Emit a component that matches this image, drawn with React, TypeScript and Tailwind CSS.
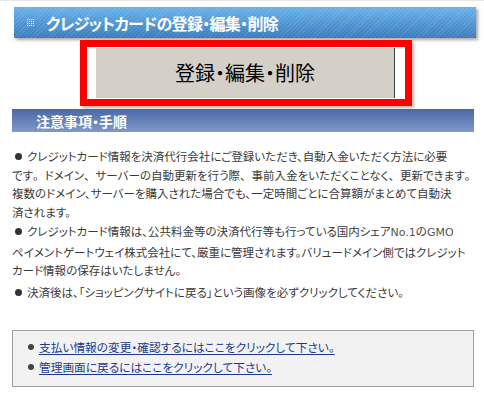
import React from "react";

const Dot = ({ cls }: { cls: string }) => (
  <span className={`inline-block rounded-full align-middle ${cls}`} />
);

const WidePunct = ({ text }: { text: string }) => (
  <>
    {text.split(/([、。])/).map((part, i) =>
      part === "、" || part === "。" ? (
        <span key={i} className="[font-feature-settings:normal]">
          {part}
        </span>
      ) : (
        <React.Fragment key={i}>{part}</React.Fragment>
      )
    )}
  </>
);

export default function App() {
  return (
    <div className="w-[484px] h-[396px] bg-white overflow-hidden font-['Noto_Sans_CJK_JP','Noto_Sans',sans-serif] [font-feature-settings:'palt'] border-t border-[#e6e6e6]">
      {/* header */}
      <div className="mx-[14px] mt-[6px] w-[462px] h-[31px] flex items-center bg-[repeating-linear-gradient(135deg,rgba(255,255,255,0.10)_0px,rgba(255,255,255,0.10)_1px,transparent_1px,transparent_3px),linear-gradient(to_bottom,#68b3ea,#3b7bbd)] shadow-[2px_2px_3px_rgba(0,0,0,0.35)]">
        <svg width="7" height="7" viewBox="0 0 7 7" className="ml-[13px] mr-[12px]">
          {[0, 2, 4, 6].map((y) =>
            [0, 2, 4, 6].map((x) => (
              <rect key={`${x}-${y}`} x={x} y={y} width="1" height="1" fill="#e8f4ff" />
            ))
          )}
        </svg>
        <span className="text-white text-[16px] font-bold leading-none tracking-[-0.7px]">
          クレジットカードの登録・編集・削除
        </span>
      </div>

      {/* red box button */}
      <div className="ml-[80px] mt-[2px] w-[332px] h-[66px] border-[7px] border-[#ff0000] bg-white shadow-[2px_2px_3px_rgba(0,0,0,0.3)] pl-[9px] pr-[10px] py-[1px]">
        <div className="h-full bg-[#d4d0c8] border-r border-[#404040] flex items-center justify-center">
          <span className="text-[20px] text-black leading-none">登録・編集・削除</span>
        </div>
      </div>

      {/* notice bar */}
      <div className="mx-[12px] mt-[3px] w-[462px] h-[23px] flex items-center pl-[24px] bg-[linear-gradient(to_bottom,#4a68a5,#7f99ca)]">
        <span className="text-white text-[14px] font-bold leading-none">注意事項・手順</span>
      </div>

      {/* body */}
      <div className="mx-[12px] mt-[15px] text-[11.5px] leading-[18.7px] text-[#3a3a3a] whitespace-nowrap">
        <div>
          <div>
            <Dot cls="w-[7px] h-[7px] bg-[#333] ml-[3px] mr-[5px] -mt-[2px]" />
            クレジットカード情報を決済代行会社にご登録いただき、自動入金いただく方法に必要
          </div>
          <div>
            <WidePunct text="です。ドメイン、サーバーの自動更新を行う際、事前入金をいただくことなく、更新できます。" />
          </div>
          <div>複数のドメイン、サーバーを購入された場合でも、一定時間ごとに合算額がまとめて自動決</div>
          <div>済されます。</div>
        </div>
        <div>
          <div>
            <Dot cls="w-[7px] h-[7px] bg-[#333] ml-[3px] mr-[5px] -mt-[2px]" />
            クレジットカード情報は、公共料金等の決済代行等も行っている国内シェア
            <span className="font-['DejaVu_Sans',sans-serif] text-[11px] text-[#555]">No.1</span>の
            <span className="font-['DejaVu_Sans',sans-serif] text-[11px] text-[#555]">GMO</span>
          </div>
          <div>ペイメントゲートウェイ株式会社にて、厳重に管理されます。バリュードメイン側ではクレジット</div>
          <div>カード情報の保存はいたしません。</div>
        </div>
        <div className="mt-[3px]">
          <Dot cls="w-[7px] h-[7px] bg-[#333] ml-[3px] mr-[5px] -mt-[2px]" />
          決済後は、「ショッピングサイトに戻る」という画像を必ずクリックしてください。
        </div>
      </div>

      {/* link box */}
      <div className="mx-[12px] mt-[28px] w-[462px] h-[57px] border border-[#a0a0a0] bg-[#f2f2f2] pt-[6px] pl-[15px] text-[11.7px] leading-[20px]">
        <div className="flex items-center">
          <Dot cls="w-[6px] h-[6px] bg-[#444] mr-[5px]" />
          <a className="text-[#1c3a8c] underline underline-offset-2">
            支払い情報の変更・確認するにはここをクリックして下さい。
          </a>
        </div>
        <div className="flex items-center">
          <Dot cls="w-[6px] h-[6px] bg-[#444] mr-[5px]" />
          <a className="text-[#1c3a8c] underline underline-offset-2">
            管理画面に戻るにはここをクリックして下さい。
          </a>
        </div>
      </div>
    </div>
  );
}
